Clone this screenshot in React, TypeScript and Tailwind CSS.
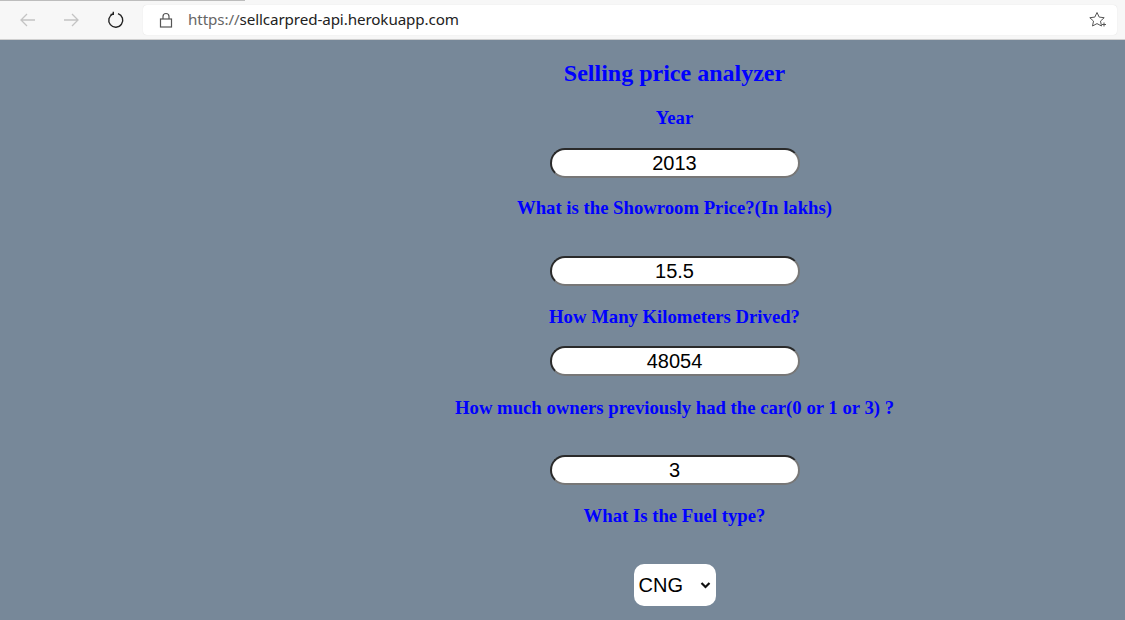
import React from 'react';

const serif = { fontFamily: '"Liberation Serif", "Times New Roman", serif' };

const Label: React.FC<{ text: string; className?: string }> = ({ text, className }) => (
  <div className={`text-[18.72px] leading-[20px] font-bold text-[#0000ff] ${className ?? ''}`} style={serif}>
    {text}
  </div>
);

const Field: React.FC<{ value: string; className?: string }> = ({ value, className }) => (
  <input
    readOnly
    value={value}
    className={`block w-[250px] h-[30px] rounded-[15px] border-2 border-t-[#2a2a2a] border-l-[#2a2a2a] border-b-[#777] border-r-[#777] bg-white text-center text-[20px] text-black outline-none font-['Liberation_Sans',Arial,sans-serif] ${className ?? ''}`}
  />
);

const BrowserBar = () => (
  <div className="h-[40px] bg-[#f7f7f7] border-b border-[#d0d0d0] flex items-center relative">
    <div className="absolute top-0 left-0 w-[245px] h-px bg-[#bdbdbd]" />
    <div className="w-[143px] flex items-center shrink-0">
      <svg className="ml-[19px]" width="18" height="18" viewBox="0 0 18 18" fill="none" stroke="#c4c4c4" strokeWidth="1.3">
        <path d="M16 9H2M8 3L2 9l6 6" />
      </svg>
      <svg className="ml-[25px]" width="18" height="18" viewBox="0 0 18 18" fill="none" stroke="#c4c4c4" strokeWidth="1.3">
        <path d="M2 9h14M10 3l6 6-6 6" />
      </svg>
      <svg className="ml-[27px]" width="18" height="18" viewBox="0 0 18 18" fill="none" stroke="#222" strokeWidth="1.4">
        <path d="M6 2.8A7 7 0 1 0 11 2.6" />
        <path d="M6.3 0.8v2.6H3.6" />
      </svg>
    </div>
    <div className="flex-1 mr-[8px] h-[30px] bg-white rounded-[4px] shadow-[0_0_1px_rgba(0,0,0,0.15)] flex items-center">
      <svg className="ml-[16px]" width="14" height="16" viewBox="0 0 14 16" fill="none" stroke="#555" strokeWidth="1.2">
        <rect x="1.5" y="7" width="11" height="8" />
        <path d="M4 7V4.5a3 3 0 0 1 6 0V7" />
      </svg>
      <span className="ml-[15px] text-[15.2px] text-[#222] font-['Segoe_UI','Noto_Sans',sans-serif] tracking-[-0.1px]">
        <span className="text-[#666]">https://</span>sellcarpred-api.herokuapp.com
      </span>
      <svg className="ml-auto mr-[11px]" width="18" height="18" viewBox="0 0 18 18" fill="none" stroke="#555" strokeWidth="1">
        <path d="M9 1.5l2.2 4.6 5 .6-3.7 3.4 1 4.9L9 12.6l-4.5 2.4 1-4.9L1.8 6.7l5-.6z" />
        <path d="M14 13.5h4M16 11.5v4" stroke="#555" />
      </svg>
    </div>
  </div>
);

export default function App() {
  return (
    <div className="w-[1125px] h-[620px] overflow-hidden bg-[#778899]">
      <BrowserBar />
      <div className="pl-[224px] flex flex-col items-center pt-[19px]">
        <div className="text-[24px] leading-[28px] font-bold text-[#0000ff]" style={serif}>
          Selling price analyzer
        </div>
        <Label text="Year" className="mt-[21px]" />
        <Field value="2013" className="mt-[20px]" />
        <Label text="What is the Showroom Price?(In lakhs)" className="mt-[20px]" />
        <Field value="15.5" className="mt-[38px]" />
        <Label text="How Many Kilometers Drived?" className="mt-[21px]" />
        <Field value="48054" className="mt-[19px]" />
        <Label text="How much owners previously had the car(0 or 1 or 3) ?" className="mt-[22px]" />
        <Field value="3" className="mt-[37px]" />
        <Label text="What Is the Fuel type?" className="mt-[21px]" />
        <div className="mt-[38px] w-[82px] h-[42px] bg-white rounded-[10px] flex items-center pl-[5px] pr-[5px] font-['Liberation_Sans',Arial,sans-serif] text-[20px] text-black">
          <span>CNG</span>
          <svg className="ml-auto" width="11" height="8" viewBox="0 0 11 8" fill="none" stroke="#111" strokeWidth="2.2">
            <path d="M1.5 2l4 4 4-4" />
          </svg>
        </div>
      </div>
    </div>
  );
}
